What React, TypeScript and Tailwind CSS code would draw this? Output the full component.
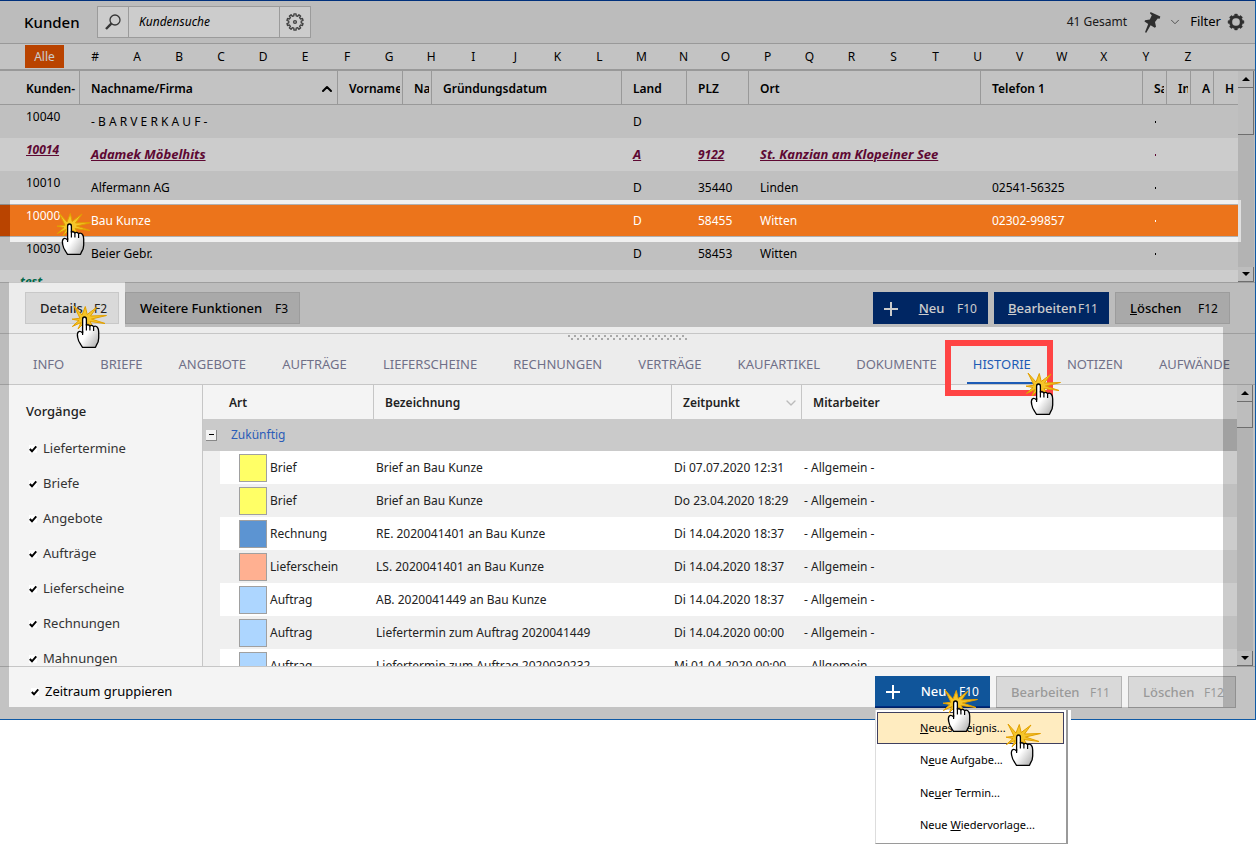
import type { ReactNode } from 'react';
import { ChevronDown, ChevronUp } from 'lucide-react';
import { clsx } from 'clsx';

const letters = ['#', ...'ABCDEFGHIJKLMNOPQRSTUVWXYZ'];

const customerHeads = ['Kunden-', 'Nachname/Firma', 'Vorname', 'Na', 'Gründungsdatum', 'Land', 'PLZ', 'Ort', 'Telefon 1', 'Sa', 'In', 'A', 'H'];

type Customer = { id: string; name: string; land: string; plz: string; ort: string; tel: string; style: 'normal' | 'marked' | 'selected' };

const customers: Customer[] = [
  { id: '10040', name: '- B A R V E R K A U F -', land: 'D', plz: '', ort: '', tel: '', style: 'normal' },
  { id: '10014', name: 'Adamek Möbelhits', land: 'A', plz: '9122', ort: 'St. Kanzian am Klopeiner See', tel: '', style: 'marked' },
  { id: '10010', name: 'Alfermann AG', land: 'D', plz: '35440', ort: 'Linden', tel: '02541-56325', style: 'normal' },
  { id: '10000', name: 'Bau Kunze', land: 'D', plz: '58455', ort: 'Witten', tel: '02302-99857', style: 'selected' },
  { id: '10030', name: 'Beier Gebr.', land: 'D', plz: '58453', ort: 'Witten', tel: '', style: 'normal' },
];

const tabs = ['INFO', 'BRIEFE', 'ANGEBOTE', 'AUFTRÄGE', 'LIEFERSCHEINE', 'RECHNUNGEN', 'VERTRÄGE', 'KAUFARTIKEL', 'DOKUMENTE', 'HISTORIE', 'NOTIZEN', 'AUFWÄNDE'];

const filters = ['Liefertermine', 'Briefe', 'Angebote', 'Aufträge', 'Lieferscheine', 'Rechnungen', 'Mahnungen'];

const history = [
  { art: 'Brief', color: 'bg-[#ffff66]', text: 'Brief an Bau Kunze', time: 'Di 07.07.2020 12:31' },
  { art: 'Brief', color: 'bg-[#ffff66]', text: 'Brief an Bau Kunze', time: 'Do 23.04.2020 18:29' },
  { art: 'Rechnung', color: 'bg-[#5c94d2]', text: 'RE. 2020041401 an Bau Kunze', time: 'Di 14.04.2020 18:37' },
  { art: 'Lieferschein', color: 'bg-[#ffb091]', text: 'LS. 2020041401 an Bau Kunze', time: 'Di 14.04.2020 18:37' },
  { art: 'Auftrag', color: 'bg-[#add6ff]', text: 'AB. 2020041449 an Bau Kunze', time: 'Di 14.04.2020 18:37' },
  { art: 'Auftrag', color: 'bg-[#add6ff]', text: 'Liefertermin zum Auftrag 2020041449', time: 'Di 14.04.2020 00:00' },
  { art: 'Auftrag', color: 'bg-[#add6ff]', text: 'Liefertermin zum Auftrag 2020030232', time: 'Mi 01.04.2020 00:00' },
];

function gearPath(teeth: number, outer: number, inner: number, c: number) {
  const pts: string[] = [];
  const step = (Math.PI * 2) / teeth;
  for (let i = 0; i < teeth; i++) {
    const a = i * step;
    [[-0.3, inner], [-0.2, outer], [0.2, outer], [0.3, inner]].forEach(([f, r]) => {
      const t = a + f * step;
      pts.push(`${(c + Math.sin(t) * r).toFixed(2)} ${(c - Math.cos(t) * r).toFixed(2)}`);
    });
  }
  return `M${pts.join('L')}Z`;
}

function ClickHand({ className }: { className: string }) {
  return (
    <svg viewBox="0 0 36 44" className={clsx('pointer-events-none absolute z-30 h-11 w-9', className)} aria-hidden="true">
      <defs>
        <linearGradient id="handShade" x1="0" y1="0" x2="1" y2="1">
          <stop offset="0.5" stopColor="#ffffff" />
          <stop offset="1" stopColor="#a8a8a8" />
        </linearGradient>
      </defs>
      <path
        d="M2 1L10 10L13.300 1.500L15.200 9.500L25 2L18.500 11L34.500 10.500L19.500 14L33 18.500L18 16.500L20.500 21L13 17L6 24L9 17.500L0.300 21.500L7 15.500L0 14.200L8 13.200Z"
        fill="#f5c52a"
        stroke="#e2a000"
        strokeWidth="1"
      />
      <path
        d="M10.600 14.200Q10.600 12 12.500 12Q14.400 12 14.400 14.200V20.200Q16.600 19 17.800 21Q20 19.600 21.500 21.600Q24 20.500 25.500 22.500Q26.700 24 26.700 27V33Q26.700 37 24.500 40L23.500 42.300H10.500L8.700 39.500Q6.300 36.500 5.700 32.500Q4.800 28.500 6.300 27Q8 25.500 10.600 28Z"
        fill="url(#handShade)"
        stroke="#000"
        strokeWidth="1.300"
        strokeLinejoin="round"
      />
      <path d="M10.600 26V30M14.400 19V25.500M17.900 20.500V25.500M21.600 21.500V26" fill="none" stroke="#000" strokeWidth="1.200" />
    </svg>
  );
}

function Check({ label, className }: { label: string; className?: string }) {
  return (
    <label className={clsx('flex items-center gap-1.5 text-[13px]', className)}>
      <span className="relative flex size-2">
        <input type="checkbox" defaultChecked className="peer size-2 appearance-none bg-white" />
        <svg viewBox="0 0 8 8" className="pointer-events-none absolute inset-0 hidden size-2 peer-checked:block" aria-hidden="true">
          <path d="M0.800 4L3 6.300L7.300 1.300" fill="none" stroke="#000" strokeWidth="2" />
        </svg>
      </span>
      {label}
    </label>
  );
}

function ScrollBar({ thumb, name }: { thumb: string; name: string }) {
  const box = 'w-full shrink-0 border-r border-b border-[#8a8a8a] bg-[#ededed]';
  return (
    <div className="flex w-4 shrink-0 flex-col bg-[#e0e0e0]">
      <button aria-label={`${name} nach oben`} className={clsx(box, 'flex h-[17px] items-center justify-center')}>
        <svg viewBox="0 0 8 4" className="h-1 w-2"><path d="M0 4L4 0L8 4Z" /></svg>
      </button>
      <div className={clsx(box, thumb)} />
      <div className="flex-1" />
      <button aria-label={`${name} nach unten`} className={clsx(box, 'flex h-[15px] items-center justify-center')}>
        <svg viewBox="0 0 8 4" className="h-1 w-2"><path d="M0 0L4 4L8 0Z" /></svg>
      </button>
    </div>
  );
}

function Plus() {
  return (
    <svg viewBox="0 0 14 14" className="size-3.5" aria-hidden="true">
      <path d="M7 0V14M0 7H14" stroke="currentColor" strokeWidth="2" />
    </svg>
  );
}

function Dim({ className }: { className: string }) {
  return <div className={clsx('pointer-events-none absolute z-10 bg-black/20', className)} />;
}

function ActionButton({ className, children, shortcut }: { className: string; children: ReactNode; shortcut: string }) {
  return (
    <button className={clsx('flex h-8 items-center justify-between pt-0.5 text-[13px]', className)}>
      {children}
      <span className="text-xs">{shortcut}</span>
    </button>
  );
}

export default function App() {
  return (
    <div className="min-h-[844px] bg-white font-['Noto_Sans','Open_Sans',sans-serif] text-xs text-black">
      <main className="relative border-t border-r border-b border-t-[#00307c] border-r-[#0f5aa5] border-b-[#0f5aa5]">
        <header className="flex h-[42px] items-center bg-[#ebebeb] pr-2.5 pl-6">
          <h1 className="w-[73px] text-[15px] font-medium">Kunden</h1>
          <div className="flex h-8 border border-[#c2c2c2] bg-white">
            <button aria-label="Suchen" className="flex w-[31px] items-center justify-center border-r border-[#c2c2c2]">
              <svg viewBox="0 0 16 16" className="size-4" fill="none" stroke="#444">
                <circle cx="10" cy="6" r="5" strokeWidth="1.300" />
                <path d="M6.300 9.700L1 15" strokeWidth="2.400" />
              </svg>
            </button>
            <input aria-label="Kundensuche" placeholder="Kundensuche" className="w-[150px] px-2.5 text-xs italic placeholder:text-black" />
            <button aria-label="Sucheinstellungen" className="flex w-[31px] items-center justify-center border-l border-[#c2c2c2]">
              <svg viewBox="0 0 18 18" className="size-[18px]" fill="none" stroke="#555" strokeWidth="1.400">
                <path d={gearPath(10, 8.2, 6.3, 9)} strokeLinejoin="round" />
                <circle cx="9" cy="9" r="1.400" />
              </svg>
            </button>
          </div>
          <div className="ml-auto flex items-center">
            <span className="mr-[17px] text-[#222]">41 Gesamt</span>
            <svg viewBox="0 0 17 22" className="mr-[7px] h-[22px] w-[17px]" fill="#3a3a3a" aria-hidden="true">
              <path d="M6.500 1L16.300 5.500L15.700 7.700L13.700 7.500L11 11L12 15.800L10.800 16.700L6.600 14.200L2.300 21.700L1 21.200L4.200 12.900L0.500 10.500L1 9.200L5.800 8.600L7.800 4.300L6 2.600Z" />
            </svg>
            <ChevronDown className="mr-2 size-3.5 text-[#555]" strokeWidth={1.5} />
            <button className="flex items-center gap-1.5 text-[13px]">
              Filter
              <svg viewBox="0 0 18 18" className="size-[18px]" fill="#3a3a3a" fillRule="evenodd" stroke="#3a3a3a" strokeWidth="0.500" strokeLinejoin="round">
                <path d={`${gearPath(8, 8, 6.7, 9)}M9 4.900A4.100 4.100 0 1 0 9 13.100A4.100 4.100 0 1 0 9 4.900Z`} />
              </svg>
            </button>
          </div>
        </header>

        <nav aria-label="Anfangsbuchstabe" className="flex h-7 items-center border-t border-b-2 border-[#c0c0c0] bg-[#f4f4f4] pr-[46px] pl-[25px]">
          <button className="h-[23px] w-[39px] bg-[#e85400] text-white">Alle</button>
          <div className="ml-2.5 flex flex-1">
            {letters.map((l) => (
              <button key={l} className="flex-1 text-center">{l}</button>
            ))}
          </div>
        </nav>

        <section aria-label="Kunden" className="flex h-[211px] overflow-hidden bg-[#f0f0f0] pr-px">
          <div className="min-w-0 flex-1">
            <table className="w-full table-fixed border-separate border-spacing-0 text-left">
              <colgroup>
                <col className="w-20" /><col className="w-[258px]" /><col className="w-[65px]" /><col className="w-[29px]" />
                <col className="w-[190px]" /><col className="w-[65px]" /><col className="w-[62px]" /><col />
                <col className="w-[162px]" /><col className="w-6" /><col className="w-6" /><col className="w-[23px]" /><col className="w-6" />
              </colgroup>
              <thead>
                <tr className="h-[34px] bg-[#f4f4f4]">
                  {customerHeads.map((h, i) => (
                    <th key={h} className={clsx('border-b border-[#c0c0c0] p-0 pt-0.5 text-xs font-semibold', i < 12 && 'border-r')}>
                      <div className={clsx('flex items-center justify-between overflow-hidden whitespace-nowrap', i === 0 ? 'pl-[26px]' : 'pl-[11px]', i === 1 ? 'pr-0.5' : 'mr-0.5')}>
                        {h}
                        {i === 1 && <ChevronUp className="size-4" strokeWidth={3} />}
                      </div>
                    </th>
                  ))}
                </tr>
              </thead>
              <tbody>
                {customers.map((c) => (
                  <tr
                    key={c.id}
                    className={clsx(
                      'h-[33px]',
                      c.style === 'marked' && 'bg-white text-[13px] font-bold text-[#760b3f] italic underline',
                      c.style === 'selected' && 'bg-[linear-gradient(to_right,#e85600_10px,#ec741b_10px)] text-white [&>td]:border-y [&>td]:border-[#b0b0b0]',
                    )}
                  >
                    <td className="relative p-0 pb-2.5 pl-[26px] text-xs">
                      {c.id}
                      {c.style === 'selected' && <ClickHand className="top-[7px] left-[57px]" />}
                    </td>
                    <td className="p-0 pl-[11px]">{c.name}</td>
                    <td />
                    <td />
                    <td />
                    <td className="p-0 pl-[11px]">{c.land}</td>
                    <td className="p-0 pl-[11px] text-xs">{c.plz}</td>
                    <td className="p-0 pl-[11px] whitespace-nowrap">{c.ort}</td>
                    <td className="p-0 pl-[11px]">{c.tel}</td>
                    <td className="p-0 pl-3"><span className="block h-0.5 w-px bg-current" /></td>
                    <td />
                    <td />
                    <td />
                  </tr>
                ))}
                <tr className="h-[33px] bg-white">
                  <td colSpan={13} className="p-0 pt-1 pl-5 align-top font-bold text-[#00805a] italic">test</td>
                </tr>
              </tbody>
            </table>
          </div>
          <ScrollBar name="Kunden" thumb="h-[47px]" />
        </section>

        <div className="flex h-[52px] items-center gap-1.5 border-y border-[#c6c6c6] bg-[#ececec] pr-[25px] pl-[25px]">
          <div className="relative">
            <ActionButton shortcut="F2" className="w-[94px] border border-[#c8c8c8] bg-[#d9d9d9] pr-[11px] pl-3.5 text-[#222]">
              <span className="font-medium">Details</span>
            </ActionButton>
            <ClickHand className="top-[13px] left-[47px]" />
          </div>
          <ActionButton shortcut="F3" className="mr-auto w-[175px] border border-[#c4c4c4] bg-[#d4d4d4] pr-[11px] pl-3.5">
            <span className="font-medium">Weitere Funktionen</span>
          </ActionButton>
          <ActionButton shortcut="F10" className="w-[115px] bg-[#00307c] px-[11px] text-white">
            <Plus />
            <span className="ml-2 font-medium"><u>N</u>eu</span>
          </ActionButton>
          <ActionButton shortcut="F11" className="w-[115px] bg-[#00307c] pr-[11px] pl-3.5 text-white">
            <span className="font-medium"><u>B</u>earbeiten</span>
          </ActionButton>
          <ActionButton shortcut="F12" className="w-[115px] border border-[#c4c4c4] bg-[#d4d4d4] pr-[11px] pl-3.5">
            <span className="font-medium"><u>L</u>öschen</span>
          </ActionButton>
        </div>

        <div className="relative h-[51px] border-b border-[#c6c6c6] bg-[#ececec]">
          <svg className="absolute top-px left-1/2 h-1.5 w-[120px] -translate-x-1/2" aria-hidden="true">
            <defs>
              <pattern id="grip" width="6" height="6" patternUnits="userSpaceOnUse">
                <rect x="0" y="0" width="2" height="2" fill="#a8a8a8" />
                <rect x="3" y="3" width="2" height="2" fill="#a8a8a8" />
              </pattern>
            </defs>
            <rect width="120" height="6" fill="url(#grip)" />
          </svg>
          <div role="tablist" className="flex h-full justify-between pt-2.5 pr-[25px] pl-[33px] text-[13px] text-[#707088]">
            {tabs.map((t) => (
              <div key={t} className="relative flex h-10">
                <button role="tab" aria-selected={t === 'HISTORIE'} className={clsx('pt-0.5 whitespace-nowrap', t === 'HISTORIE' && 'text-[#1d5bb5]')}>{t}</button>
                {t === 'HISTORIE' && (
                  <>
                    <span className="absolute -inset-x-1.5 bottom-0 h-0.5 bg-[#1d5bb5]" />
                    <span className="pointer-events-none absolute -top-1 -right-[22px] -left-7 z-20 h-14 border-6 border-[#ff4444]" />
                    <ClickHand className="top-7 left-[53px]" />
                  </>
                )}
              </div>
            ))}
          </div>
        </div>

        <section className="flex h-[281px] overflow-hidden bg-[#f4f4f4] pr-0.5">
          <aside className="w-[203px] shrink-0 border-r border-[#c6c6c6] pt-4 text-[#333]">
            <h2 className="mb-2.5 pl-[26px] text-[13px] leading-5 font-medium text-[#222]">Vorgänge</h2>
            {filters.map((f) => (
              <Check key={f} label={f} className="h-[35px] pl-[29px]" />
            ))}
          </aside>
          <div className="min-w-0 flex-1">
            <table className="w-full table-fixed border-separate border-spacing-0 bg-[#f0f0f0] text-left text-[#222]">
              <colgroup>
                <col className="w-[17px]" /><col className="w-[154px]" /><col className="w-[298px]" /><col className="w-[130px]" /><col />
              </colgroup>
              <thead>
                <tr className="h-[34px] bg-[#f4f4f4] text-xs">
                  <th colSpan={2} className="border-r border-[#c6c6c6] p-0 pt-0.5 pl-[26px] font-semibold">Art</th>
                  <th className="border-r border-[#c6c6c6] p-0 pt-0.5 pl-[11px] font-semibold">Bezeichnung</th>
                  <th className="border-r border-[#c6c6c6] p-0 pt-0.5 pl-[11px] font-semibold">
                    <div className="flex items-center justify-between pr-0.5">
                      Zeitpunkt
                      <ChevronDown className="size-4 text-[#bbb]" strokeWidth={2} />
                    </div>
                  </th>
                  <th className="p-0 pt-0.5 pl-[11px] font-semibold">Mitarbeiter</th>
                </tr>
              </thead>
              <tbody>
                <tr className="h-8 bg-[#cacaca]">
                  <td colSpan={5} className="p-0 pl-[3px]">
                    <div className="flex items-center gap-3.5 text-[#2b5cb8]">
                      <button aria-label="Gruppe schließen" className="flex size-[11px] items-center justify-center border-r border-b border-[#888] bg-[#f2f2f2]">
                        <span className="h-px w-[5px] bg-black" />
                      </button>
                      Zukünftig
                    </div>
                  </td>
                </tr>
                {history.map((h, i) => (
                  <tr key={i} className="h-[33px]">
                    <td className="p-0" />
                    <td className={clsx('p-0 pl-[19px]', i % 2 === 0 && 'bg-white')}>
                      <div className="flex items-center gap-[3px]">
                        <span className={clsx('size-7 border border-[#a0a0a0]', h.color)} />
                        {h.art}
                      </div>
                    </td>
                    <td className={clsx('p-0 pl-0.5', i % 2 === 0 && 'bg-white')}>{h.text}</td>
                    <td className={clsx('p-0 pl-0.5 whitespace-nowrap', i % 2 === 0 && 'bg-white')}>{h.time}</td>
                    <td className={clsx('p-0 pl-0.5', i % 2 === 0 && 'bg-white')}>- Allgemein -</td>
                  </tr>
                ))}
              </tbody>
            </table>
          </div>
          <ScrollBar name="Historie" thumb="h-[26px]" />
        </section>

        <footer className="flex h-[53px] items-start gap-1.5 border-t border-[#c6c6c6] bg-[#f4f4f4] pt-[9px] pr-[19px] pl-[31px]">
          <Check label="Zeitraum gruppieren" className="mr-auto h-8" />
          <div className="relative">
            <ActionButton shortcut="F10" className="w-[115px] border-b-2 border-[#002c80] bg-[#10559a] px-[11px] text-white">
              <Plus />
              <span className="ml-2 font-medium">Neu</span>
            </ActionButton>
            <ClickHand className="top-[13px] left-[68px]" />
            <div role="menu" className="absolute top-[34px] left-0 z-20 w-[196px] bg-white pr-[3px] text-[11px]">
              <div className="border-r-2 border-b border-l border-r-[#9a9a9a] border-b-[#9a9a9a] border-l-[#ddd] px-px pt-0.5 pb-0.5">
                <button role="menuitem" className="relative flex h-8 w-[187px] items-center border border-[#3f3f5f] bg-[#ffecc0] pl-[42px]">
                  <span><u>N</u>eues Ereignis...</span>
                  <ClickHand className="top-2.5 left-[128px]" />
                </button>
                <button role="menuitem" className="flex h-[33px] w-full items-center pl-[43px]"><span>N<u>e</u>ue Aufgabe...</span></button>
                <button role="menuitem" className="flex h-8 w-full items-center pl-[43px]"><span>Ne<u>u</u>er Termin...</span></button>
                <button role="menuitem" className="flex h-8 w-full items-center pl-[43px]"><span>Neue <u>W</u>iedervorlage...</span></button>
              </div>
            </div>
          </div>
          <ActionButton shortcut="F11" className="w-[126px] border border-[#b4b4b4] bg-[#d9d9d9] pr-[11px] pl-3.5 text-[#999]">
            <span className="font-medium">Bearbeiten</span>
          </ActionButton>
          <ActionButton shortcut="F12" className="w-[108px] border border-[#b4b4b4] bg-[#d9d9d9] pr-[11px] pl-3.5 text-[#999]">
            <span className="font-medium">Löschen</span>
          </ActionButton>
        </footer>

        <Dim className="inset-x-0 top-0 h-[199px]" />
        <Dim className="top-[199px] left-0 h-[42px] w-2.5" />
        <Dim className="top-[199px] right-0 h-[42px] w-3.5" />
        <Dim className="inset-x-0 top-[241px] h-10" />
        <Dim className="top-[281px] left-0 h-[45px] w-[9px]" />
        <Dim className="top-[281px] right-0 left-[125px] h-[45px]" />
        <Dim className="top-[326px] bottom-3 left-0 w-[9px]" />
        <Dim className="top-[326px] right-0 bottom-3 w-8" />
        <Dim className="inset-x-0 bottom-0 h-3" />
      </main>
    </div>
  );
}
